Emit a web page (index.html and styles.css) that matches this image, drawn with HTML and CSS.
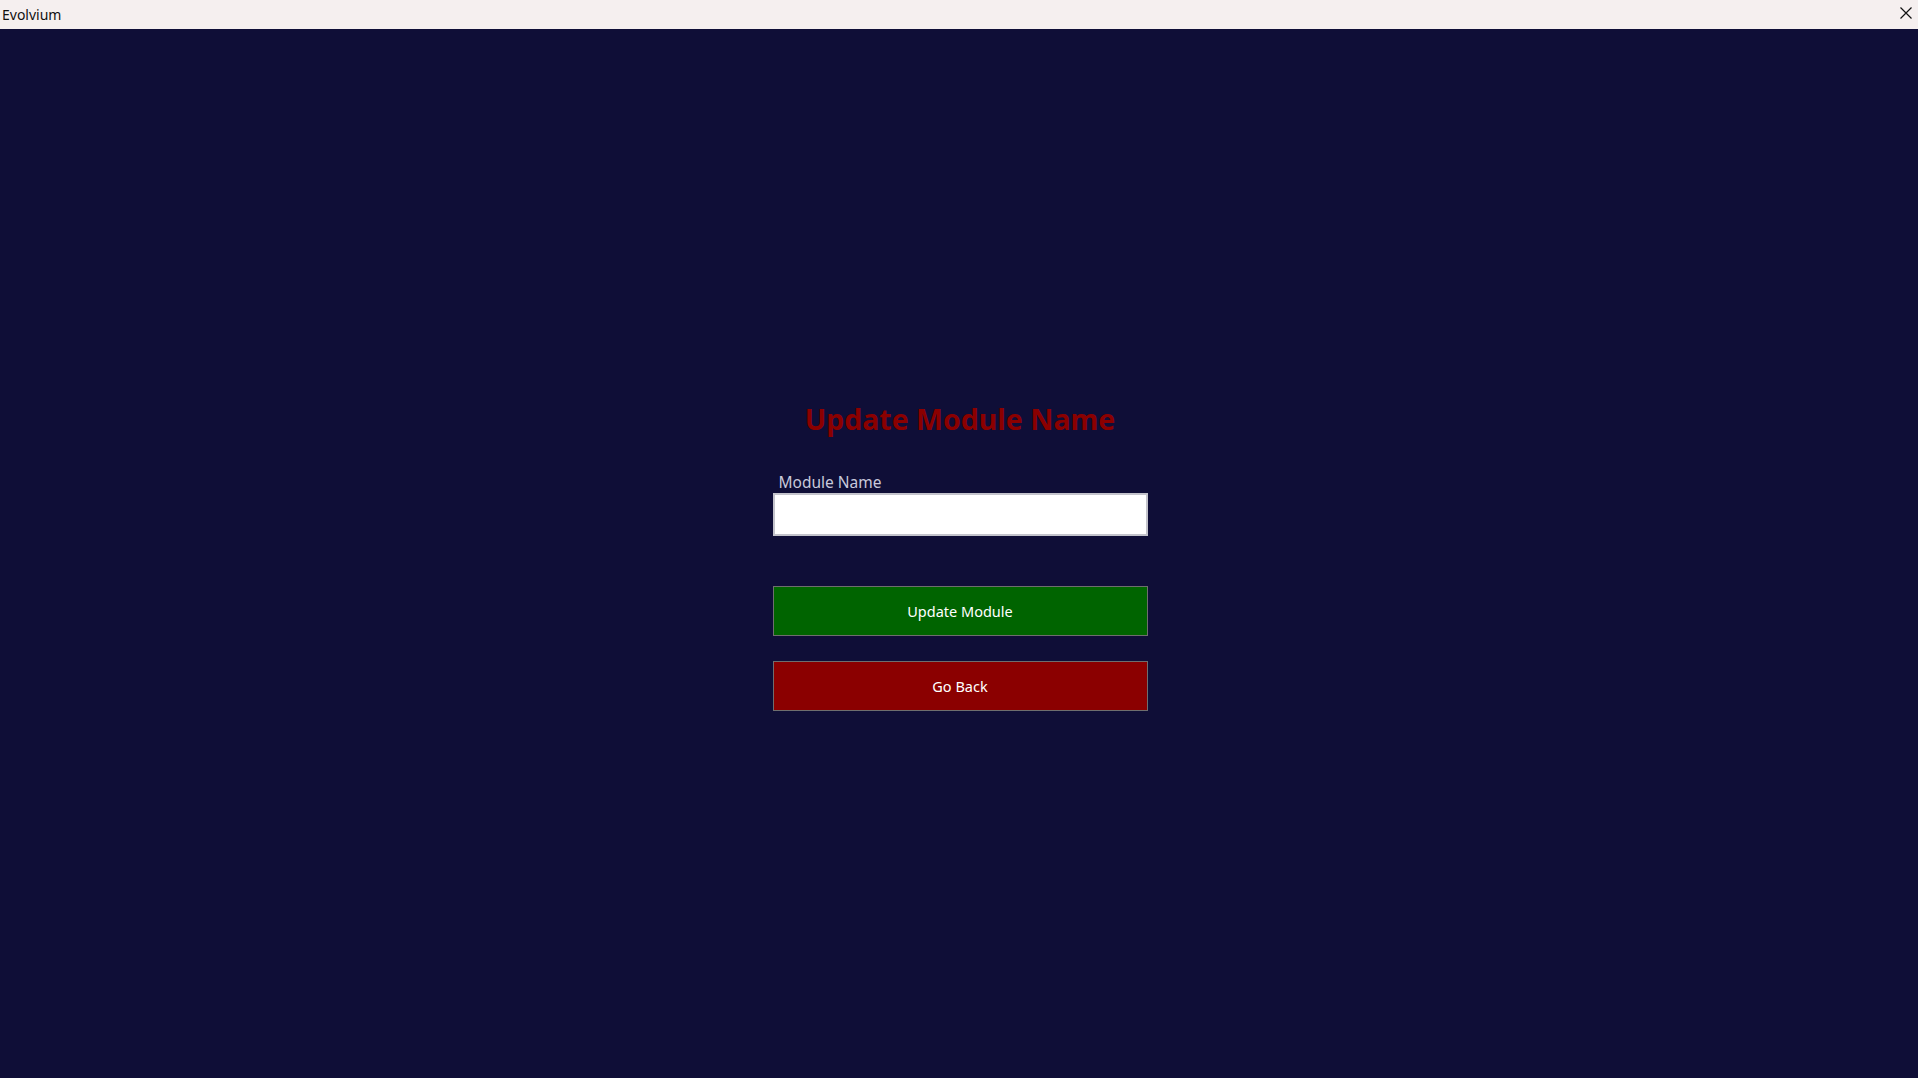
FILE: index.html
```html
<!DOCTYPE html>
<html>
<head>
<meta charset="utf-8">
<link rel="stylesheet" href="styles.css">
</head>
<body>
<div class="app">
  <header class="titlebar">
    <span class="title">Evolvium</span>
    <span class="close">
      <svg width="12" height="12" viewBox="0 0 12 12"><path d="M0.5 0.5 L11.5 11.5 M11.5 0.5 L0.5 11.5" stroke="#111" stroke-width="1.2" fill="none"/></svg>
    </span>
  </header>
  <main class="content">
    <div class="form">
      <h1 class="heading">Update Module Name</h1>
      <label class="label" for="mname">Module Name</label>
      <input class="field" id="mname" type="text">
      <button class="btn btn-green">Update Module</button>
      <button class="btn btn-red">Go Back</button>
    </div>
  </main>
</div>
</body>
</html>
```

FILE: styles.css
```css
html, body {
  margin: 0;
  padding: 0;
  height: 100%;
}
body {
  font-family: "Noto Sans", "Open Sans", sans-serif;
  background: #0f0e37;
}
.app {
  display: flex;
  flex-direction: column;
  height: 100vh;
}
.titlebar {
  height: 29px;
  flex: 0 0 29px;
  background: #f5efef;
  display: flex;
  align-items: center;
  justify-content: space-between;
  padding: 0 6px 0 2px;
  box-sizing: border-box;
}
.title {
  font-size: 14px;
  color: #111;
  line-height: 1;
  padding-top: 1px;
}
.close {
  display: flex;
  align-items: center;
  margin-bottom: 3px;
}
.content {
  flex: 1;
  display: flex;
  align-items: center;
  justify-content: center;
  padding-top: 2px;
}
.form {
  width: 375px;
  display: flex;
  flex-direction: column;
  margin-left: 2px;
}
.heading {
  margin: 0 0 33px;
  text-align: center;
  color: #8b0000;
  font-size: 28.5px;
  font-weight: 700;
  line-height: 40px;
}
.label {
  color: #c9c9db;
  font-size: 15.5px;
  line-height: 20px;
  padding-left: 6px;
  margin-bottom: 1px;
}
.field {
  height: 43px;
  box-sizing: border-box;
  border: 2px solid #c3c3cb;
  background: #fff;
  margin: 0 0 50px;
  padding: 0 8px;
  outline: none;
}
.btn {
  height: 50px;
  box-sizing: border-box;
  border: 1px solid #6e6e6e;
  color: #fff;
  font-family: "Noto Sans", "Open Sans", sans-serif;
  font-size: 14.5px;
  padding: 0;
  cursor: pointer;
}
.btn-green {
  background: #006400;
  margin-bottom: 25px;
}
.btn-red {
  background: #8b0000;
}
```
